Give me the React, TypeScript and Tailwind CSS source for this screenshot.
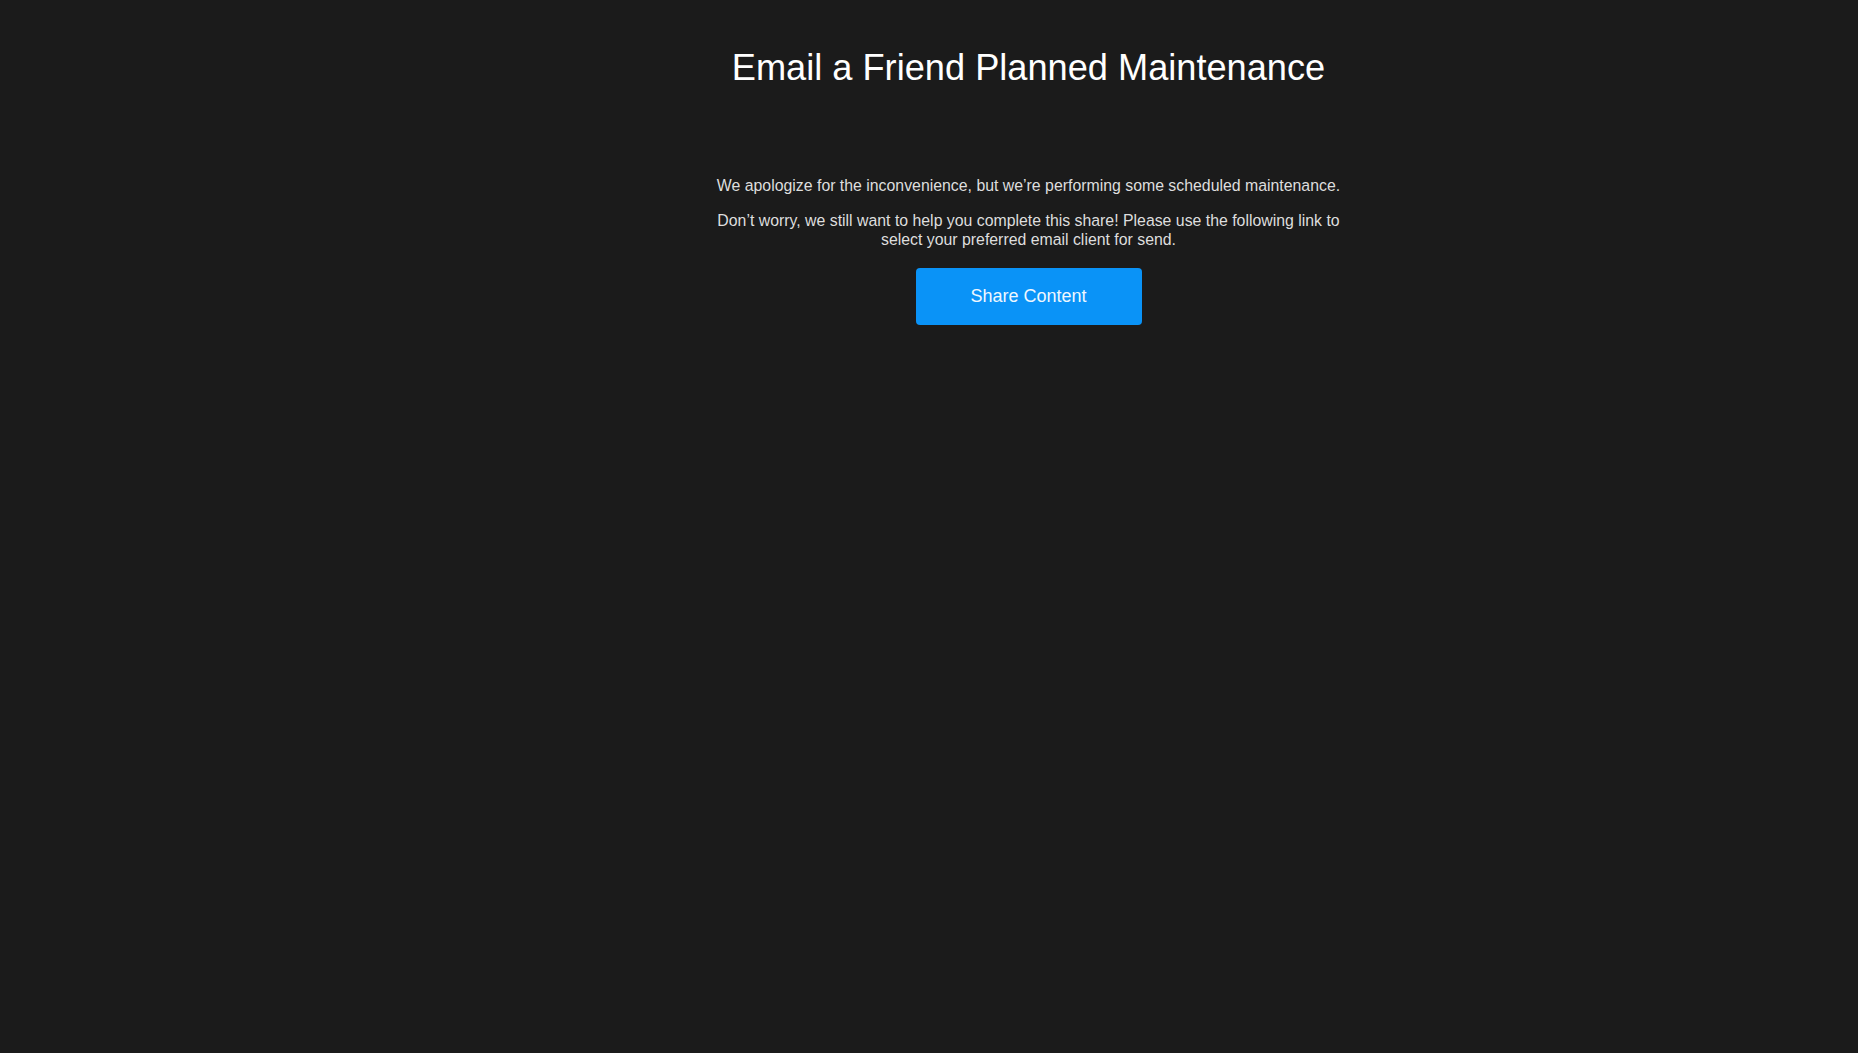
import React from "react";

function MaintenanceNotice() {
  return (
    <div className="flex flex-col items-center pt-[47px]">
      <h1 className="text-[36.2px] leading-[41px] font-normal text-white">
        Email a Friend Planned Maintenance
      </h1>
      <div className="mt-[88px] w-[640px] text-center text-[15.85px] leading-[19.2px] text-[#dedede]">
        <p>
          We apologize for the inconvenience, but we’re performing some
          scheduled maintenance.
        </p>
        <p className="mt-4">
          Don’t worry, we still want to help you complete this share! Please
          use the following link to select your preferred email client for
          send.
        </p>
      </div>
      <button
        type="button"
        className="mt-[18px] w-[226px] h-[57px] rounded bg-[#0a93f7] text-[18px] text-[#eef7ff]"
      >
        Share Content
      </button>
    </div>
  );
}

export default function App() {
  return (
    <div
      className="flex min-h-screen bg-[#1b1b1b]"
      style={{ fontFamily: '"Liberation Sans", Arial, sans-serif' }}
    >
      <aside className="w-[199px] shrink-0" />
      <main className="flex-1">
        <MaintenanceNotice />
      </main>
    </div>
  );
}
